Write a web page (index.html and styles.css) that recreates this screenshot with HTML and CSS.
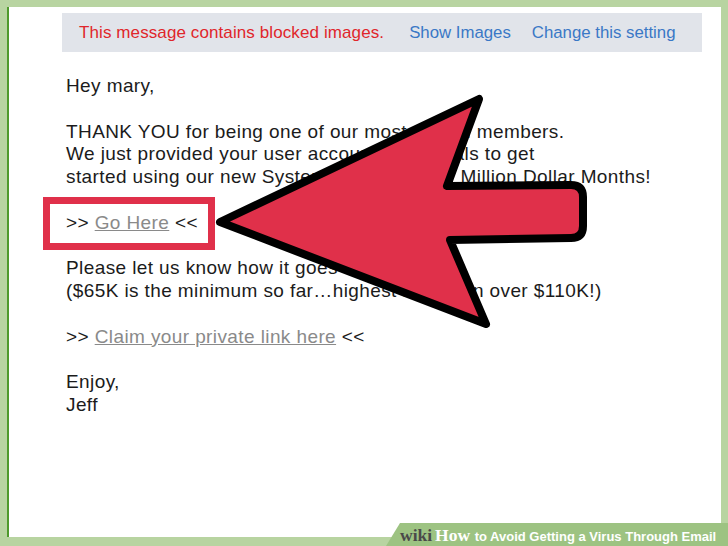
FILE: index.html
```html
<!DOCTYPE html>
<html>
<head>
<meta charset="utf-8">
<link rel="stylesheet" href="styles.css">
</head>
<body>
<div class="page">
  <div class="notice">
    <span class="blocked">This message contains blocked images.</span>
    <span class="action show">Show Images</span>
    <span class="action">Change this setting</span>
  </div>
  <div class="mail">
    <p>Hey mary,</p>
    <p>THANK YOU for being one of our most valued members.<br>We just provided your user account credentials to get<br>started using our new System to create your Million Dollar Months!</p>
    <p class="highlight">&gt;&gt; <span class="link">Go Here</span> &lt;&lt;</p>
    <p>Please let us know how it goes for you.<br>($65K is the minimum so far…highest has been over $110K!)</p>
    <p>&gt;&gt; <span class="link">Claim your private link here</span> &lt;&lt;</p>
    <p class="last">Enjoy,<br>Jeff</p>
  </div>
</div>
<svg class="arrow" viewBox="0 0 728 546" width="728" height="546">
  <path d="M220 222 L479 99 L447 186 L571 185 Q583 185 583 197 L583 226 Q583 238 571 238 L450 240 L486 324 Z" fill="#e0304a" stroke="#000" stroke-width="8" stroke-linejoin="round"/>
</svg>
<div class="banner"><span class="wiki">wiki</span><span class="how">How</span> to Avoid Getting a Virus Through Email</div>
</body>
</html>
```
FILE: styles.css
```css
html, body {
  margin: 0;
  padding: 0;
}
body {
  width: 728px;
  height: 546px;
  background: #b8d4a1;
  position: relative;
  overflow: hidden;
  font-family: "Liberation Sans", Arial, sans-serif;
}
.page {
  margin: 7px 7px 0 7px;
  height: 530px;
  background: #fff;
  border-left: 2px solid #4f9a2c;
  box-sizing: border-box;
  padding: 6px 19px 0 53px;
}
.notice {
  height: 39px;
  background: #e1e4ea;
  display: flex;
  align-items: center;
  padding-left: 17px;
  font-size: 17px;
}
.blocked {
  color: #e0262b;
  margin-right: 25px;
  letter-spacing: 0.1px;
}
.action {
  color: #3a78c6;
  font-size: 16.8px;
}
.show {
  margin-right: 21px;
}
.mail {
  padding: 23px 0 0 4px;
  font-size: 19px;
  letter-spacing: 0.4px;
  line-height: 22.8px;
  color: #1b1b1b;
}
.mail p {
  margin: 0 0 22.8px 0;
}
.mail p.last {
  margin-bottom: 0;
}
.link {
  color: #8a8a8a;
  text-decoration: underline;
}
.mail p.highlight {
  width: fit-content;
  margin: -15px 0 7.8px -23px;
  padding: 8px 10px 8px 16px;
  border: 7px solid #e0304a;
}
.arrow {
  position: absolute;
  left: 0;
  top: 0;
}
.banner {
  position: absolute;
  left: 386px;
  right: 0;
  bottom: 0;
  height: 23px;
  background: #9dc382;
  clip-path: polygon(14px 0, 100% 0, 100% 100%, 0 100%);
  color: #fff;
  font-weight: bold;
  font-size: 13px;
  line-height: 24px;
  padding-left: 14px;
  box-sizing: border-box;
  white-space: nowrap;
}
.wiki {
  font-family: "Liberation Serif", serif;
  color: #4a4a4a;
  font-size: 17.5px;
}
.how {
  font-family: "Liberation Serif", serif;
  font-size: 17.5px;
  margin-left: 3px;
  margin-right: 1px;
}
```
